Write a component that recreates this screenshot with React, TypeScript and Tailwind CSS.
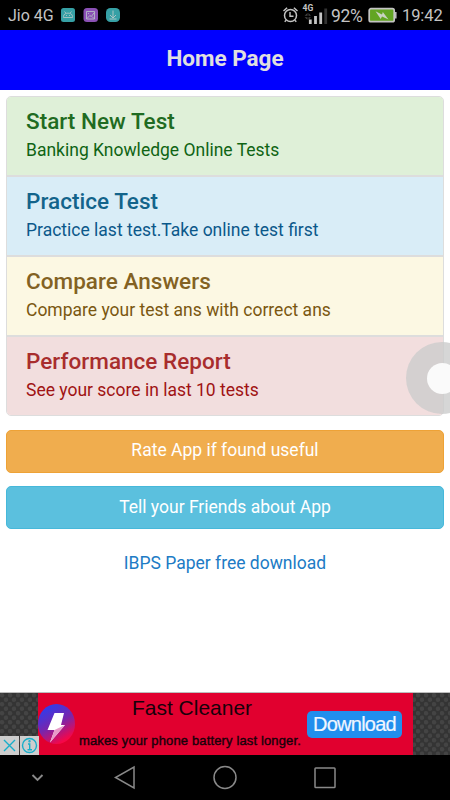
import React from "react";

const items = [
  { title: "Start New Test", text: "Banking Knowledge Online Tests", box: "bg-[#dff0d8] h-20 border-b-2", head: "text-[#1f6b22]", sub: "text-[#0f6414]" },
  { title: "Practice Test", text: "Practice last test.Take online test first", box: "bg-[#d9edf7] h-20 border-b-2", head: "text-[#13648b]", sub: "text-[#0b588a]" },
  { title: "Compare Answers", text: "Compare your test ans with correct ans", box: "bg-[#fcf8e3] h-20 border-b-2", head: "text-[#836223]", sub: "text-[#7a5711]" },
  { title: "Performance Report", text: "See your score in last 10 tests", box: "bg-[#f2dede] h-[78px]", head: "text-[#a82d2d]", sub: "text-[#a01313]" },
];

function StatusBar() {
  return (
    <header className="flex h-[30px] items-center bg-black pl-2 pr-[7px] text-[#c4c4c4]">
      <span className="mt-[2px] w-[53px] whitespace-nowrap text-[16px]">Jio 4G</span>
      <svg width="60" height="15" viewBox="0 0 60 15" fill="none" stroke="#b9c9c9">
        <rect x="0" y="0" width="14" height="14" rx="2.500" fill="#36a0a5" stroke="none" />
        <path d="M2.500 9.500V8.500c0-4.500 9-4.500 9 0v1zM3.500 3.500L5 5.200M10.500 3.500L9 5.200M5 7.500h1M8 7.500h1" strokeWidth="0.8" />
        <rect x="22.500" y="0" width="14.500" height="14" rx="3.500" fill="#8a50b5" stroke="none" />
        <path d="M25.500 3.500h8v7.500h-8zM26 10.500l2.800-3 1.500 1 3-4M27 5.500h1M31 8.500l2 2" strokeWidth="0.8" />
        <rect x="45" y="0" width="14" height="14" rx="4.500" fill="#36a0a5" stroke="none" />
        <path d="M52 2.500v7M49 7l3 3 3-3M48.500 11h7" strokeWidth="0.9" />
      </svg>
      <svg className="ml-auto" width="49" height="26" viewBox="0 0 49 26" fill="none" stroke="#c4c4c4">
        <circle cx="8.500" cy="13.500" r="6" strokeWidth="1.500" />
        <path d="M8 10v4.200h3.500" strokeWidth="1.400" />
        <path d="M1.500 9l3.600-3.200M15.500 9l-3.600-3.200M4.200 18.300l-1.500 1.500M12.800 18.300l1.500 1.500" strokeWidth="1.500" />
        <text x="20.500" y="8.500" fill="#c4c4c4" stroke="none" fontFamily="Roboto, sans-serif" fontSize="8.500" fontWeight="700">4G</text>
        <path d="M22.500 13.800l3-2.700v2.700zM22.500 15.200l3 2.500v-2.500zM26.500 13.800v-2.700l2.500 2.700zM26.500 15.200h2.500l-2.500 2.500z" fill="#444" stroke="none" />
        <path d="M28.300 17.500V22" strokeWidth="2.800" />
        <path d="M33.500 14V22M38.700 10.500V22" strokeWidth="2.800" />
        <path d="M43.700 6.500V22" stroke="#333333" strokeWidth="2.800" />
      </svg>
      <span className="mt-[2px] w-[37px] whitespace-nowrap text-[17.500px] tracking-[-0.300px]">92%</span>
      <svg width="29" height="16" viewBox="0 0 29 16" fill="none">
        <rect x="1.200" y="1.700" width="25" height="13" rx="1.800" fill="#62a522" stroke="#c4c4c4" strokeWidth="1.700" />
        <path d="M27.800 5v6.500" stroke="#c4c4c4" strokeWidth="1.500" />
        <path d="M7.500 4.200L14 7.500l.8-2.500L20.500 12.500l-6.500-3-1.300 2.500z" fill="#c8d2c0" />
      </svg>
      <span className="ml-[5px] mt-[2px] w-[41px] whitespace-nowrap text-[16.500px] tracking-[-0.100px]">19:42</span>
    </header>
  );
}

function AdBanner() {
  return (
    <aside className="relative flex h-[62px] w-full bg-[#303030] [font-family:'Liberation_Sans',Arial,sans-serif]">
      <svg className="absolute inset-0" width="450" height="62">
        <defs>
          <pattern id="mesh" width="8" height="9" patternUnits="userSpaceOnUse">
            <rect width="8" height="9" fill="#343434" />
            <circle cx="2" cy="2.200" r="2.200" fill="#444444" />
            <circle cx="6" cy="6.700" r="2.200" fill="#444444" />
          </pattern>
        </defs>
        <rect width="450" height="62" fill="url(#mesh)" />
      </svg>
      <div className="relative ml-[38px] flex h-full w-[375px] bg-[#e1002f]">
        <svg className="mt-[11px] h-10 w-[37px] shrink-0" viewBox="0 0 37 40" preserveAspectRatio="none">
          <defs>
            <linearGradient id="disc" x1="0.3" y1="0.05" x2="0.75" y2="0.9">
              <stop offset="0" stopColor="#333bea" />
              <stop offset="0.5" stopColor="#7825ac" />
              <stop offset="1" stopColor="#f70647" />
            </linearGradient>
          </defs>
          <ellipse cx="18.500" cy="20" rx="18.500" ry="20" fill="url(#disc)" />
          <path d="M16.500 9H26l-3 12h4L12 38.500l4.500-12.500h-7z" fill="#fff" />
          <path d="M16.500 26L27 21 12 38.500z" fill="#e89ac8" />
        </svg>
        <div className="flex w-[230px] flex-col items-center whitespace-nowrap text-[#18000a]">
          <div className="mt-[2px] pl-[4px] text-[21px] leading-[26px]">Fast Cleaner</div>
          <div className="mt-[11px] text-[13px] leading-[18px] tracking-[0.140px] [-webkit-text-stroke:0.400px_#18000a]">makes your phone battery last longer.</div>
        </div>
        <button className="ml-[2px] mt-[18px] flex h-[27px] w-[95px] shrink-0 items-center justify-center rounded-[5px] bg-[#218eed] pb-px text-[20px] tracking-[-0.750px] text-[#f0f6ff] [-webkit-text-stroke:0.200px_#f0f6ff]">Download</button>
      </div>
      <svg className="absolute bottom-0 left-0" width="39" height="19" fill="none" stroke="#18aeca" strokeWidth="1.400">
        <rect width="19" height="19" fill="#cecece" stroke="none" />
        <rect x="20" width="19" height="19" fill="#cecece" stroke="none" />
        <path d="M4 4l11 11M15 4L4 15" />
        <circle cx="29.500" cy="9.500" r="7" />
        <path d="M28 8h1.700v5.500M27.500 13.700h4.500" />
        <circle cx="29.500" cy="5.300" r="0.500" />
      </svg>
    </aside>
  );
}

export default function App() {
  return (
    <div className="relative flex h-[800px] w-[450px] flex-col overflow-hidden bg-white [font-family:Roboto,sans-serif]">
      <StatusBar />
      <h1 className="flex h-[60px] items-center justify-center bg-[#0000ff] pb-[2px] text-[22.500px] font-bold text-[#e0e0e0]">Home Page</h1>
      <main className="flex flex-1 flex-col px-1.5 pt-1.5">
        <div className="h-80 overflow-hidden rounded-[5px] border border-[#dddddd]">
          {items.map((item) => (
            <section key={item.title} className={`border-[#dddddd] pl-[19px] whitespace-nowrap ${item.box}`}>
              <h2 className={`pt-[10px] text-[22.500px] font-medium leading-[28px] tracking-[0.030px] ${item.head}`}>{item.title}</h2>
              <p className={`pt-[3px] text-[17.500px] leading-[25px] ${item.sub}`}>{item.text}</p>
            </section>
          ))}
        </div>
        <button className="mt-[14px] h-[42.500px] rounded-[5px] border border-[#eea236] bg-[#f0ad4e] pb-[2px] text-[17.500px] text-white">Rate App if found useful</button>
        <button className="mt-[13.500px] h-[42.500px] rounded-[5px] border border-[#46b8da] bg-[#5bc0de] text-[17.500px] text-white">Tell your Friends about App</button>
        <a className="mt-[21px] text-center text-[17.500px] leading-[26px] text-[#207bc5]">IBPS Paper free download</a>
      </main>
      <div className="h-px shrink-0 bg-[#bdbdbd]" />
      <AdBanner />
      <nav className="h-[45px] shrink-0 bg-black">
        <svg width="450" height="45" fill="none" stroke="#898989" strokeWidth="1.500">
          <path d="M32.500 20l5 5 5-5" strokeWidth="1.900" />
          <path d="M134 12v21l-18.500-10.500z" />
          <circle cx="225" cy="22.500" r="11" />
          <rect x="315" y="13" width="20" height="19.500" rx="0.800" />
        </svg>
      </nav>
      <div className="absolute left-[406px] top-[342px] flex size-[72px] items-center justify-center rounded-full bg-[#cccccc]/80">
        <div className="size-[31px] rounded-full bg-[#fafafa]" />
      </div>
    </div>
  );
}
